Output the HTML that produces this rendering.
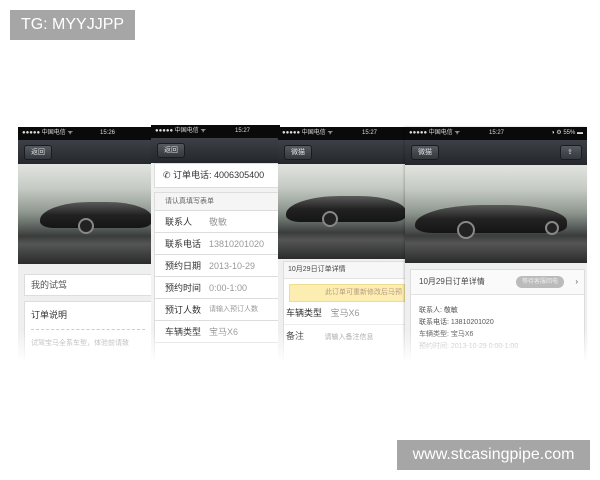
<!DOCTYPE html>
<html><head><meta charset="utf-8"><style>
*{margin:0;padding:0;box-sizing:border-box}
body{width:600px;height:480px;background:#fff;position:relative;overflow:hidden;font-family:"Liberation Sans","Noto Sans CJK SC",sans-serif}
.a{position:absolute}
.lbl{background:#a6a6a6;color:#fff;font-size:16px;line-height:30px;text-align:center}
.sb{background:#0a0a0a;color:#ddd;font-size:6px;line-height:13px;padding-left:4px;white-space:nowrap}
.nav{background:linear-gradient(#3d4147,#24272b)}
.btn{position:absolute;top:5px;left:6px;height:15px;padding:0 6px;background:linear-gradient(#555a61,#34383d);border:1px solid #1a1c1f;border-radius:3px;color:#ddd;font-size:7px;line-height:13px}
.car{background:linear-gradient(#e2e4df 0%,#c4cac3 25%,#8f9890 48%,#6d746f 58%,#3a3d3c 72%,#555 80%,#2a2b2b 100%);overflow:hidden}
.body{position:absolute;background:linear-gradient(#5a5a5a,#222 50%,#151515);border-radius:45% 40% 12% 12%/70% 60% 25% 25%}
.wh{position:absolute;background:#222;border:2px solid #888;border-radius:50%}
.pg{background:#efefef;overflow:hidden}
.row{position:absolute;left:0;right:0;height:22px;border-bottom:1px solid #ddd;background:#fff;font-size:9px;line-height:22px;color:#333;padding-left:10px;white-space:nowrap}
.row span{color:#999;position:absolute;left:54px}
.fade{background:linear-gradient(rgba(255,255,255,0),#fff 80%)}
</style></head><body>
<div class="a lbl" style="left:10px;top:10px;width:125px;height:30px">TG: MYYJJPP</div>

<!-- phone 1 -->
<div class="a pg" style="left:18px;top:127px;width:134px;height:235px">
<div class="a sb" style="left:0;top:0;width:134px;height:13px">●●●●● 中国电信 ᯤ<span style="position:absolute;left:82px">15:26</span></div>
<div class="a nav" style="left:0;top:13px;width:134px;height:24px"><div class="btn">返回</div></div>
<div class="a car" style="left:0;top:37px;width:134px;height:100px">
<div class="body" style="left:22px;top:38px;width:112px;height:26px"></div>
<div class="wh" style="left:60px;top:54px;width:16px;height:16px"></div>
</div>
<div class="a" style="left:6px;top:147px;width:128px;height:22px;background:#fff;border:1px solid #ddd;font-size:9px;line-height:20px;color:#555;padding-left:6px">我的试驾</div>
<div class="a" style="left:6px;top:174px;width:128px;height:70px;background:#fff;border:1px solid #ddd;font-size:9px;color:#333;padding:6px">订单说明<div style="border-top:1px dashed #ccc;margin:8px 0 8px"></div><div style="color:#999;font-size:7px;white-space:nowrap">试驾宝马全系车型，体验前请致</div></div>
</div>

<!-- phone 2 -->
<div class="a pg" style="left:151px;top:125px;width:129px;height:235px;background:#f2f2f2">
<div class="a sb" style="left:0;top:0;width:129px;height:13px">●●●●● 中国电信 ᯤ<span style="position:absolute;left:84px">15:27</span></div>
<div class="a nav" style="left:0;top:13px;width:129px;height:25px"><div class="btn">返回</div></div>
<div class="a" style="left:3px;top:38px;width:126px;height:25px;background:#fff;border:1px solid #ddd;font-size:9px;line-height:23px;color:#333;padding-left:8px;white-space:nowrap">✆ 订单电话: 4006305400</div>
<div class="a" style="left:3px;top:67px;width:126px;height:180px;background:#fff;border:1px solid #ddd">
<div class="row" style="top:0;height:18px;line-height:18px;background:#f5f5f5;font-size:7px;color:#666">请认真填写表单</div>
<div class="row" style="top:18px">联系人<span>敬敏</span></div>
<div class="row" style="top:40px">联系电话<span>13810201020</span></div>
<div class="row" style="top:62px">预约日期<span>2013-10-29</span></div>
<div class="row" style="top:84px">预约时间<span>0:00-1:00</span></div>
<div class="row" style="top:106px">预订人数<span style="font-size:7px">请输入预订人数</span></div>
<div class="row" style="top:128px">车辆类型<span>宝马X6</span></div>
</div>
</div>

<!-- phone 3 -->
<div class="a pg" style="left:278px;top:127px;width:128px;height:235px">
<div class="a sb" style="left:0;top:0;width:128px;height:13px">●●●●● 中国电信 ᯤ<span style="position:absolute;left:84px">15:27</span></div>
<div class="a nav" style="left:0;top:13px;width:128px;height:24px"><div class="btn">微猫</div></div>
<div class="a car" style="left:0;top:37px;width:128px;height:95px">
<div class="body" style="left:8px;top:32px;width:120px;height:26px"></div>
<div class="wh" style="left:44px;top:47px;width:16px;height:16px"></div>
</div>
<div class="a" style="left:5px;top:134px;width:123px;height:110px;background:#fff;border:1px solid #ddd">
<div style="font-size:7px;line-height:16px;padding-left:4px;color:#444;border-bottom:1px solid #e2e2e2;background:#f7f7f7">10月29日订单详情</div>
<div style="margin:5px 0 0 5px;height:18px;background:#fbeeb0;border:1px solid #eedc90;font-size:7px;line-height:16px;color:#b98;text-align:right;padding-right:2px;white-space:nowrap">此订单可重新修改后马预</div>
<div style="font-size:9px;line-height:22px;padding-left:2px;color:#333;border-bottom:1px solid #eee;white-space:nowrap">车辆类型 <span style="color:#999;margin-left:6px">宝马X6</span></div>
<div style="font-size:9px;line-height:22px;padding-left:2px;color:#333;white-space:nowrap">备注 <span style="color:#999;margin-left:18px;font-size:7px">请输入备注信息</span></div>
</div>
</div>

<!-- phone 4 -->
<div class="a pg" style="left:405px;top:127px;width:182px;height:235px;box-shadow:-1px 0 2px rgba(0,0,0,.2)">
<div class="a sb" style="left:0;top:0;width:182px;height:13px">●●●●● 中国电信 ᯤ<span style="position:absolute;left:84px">15:27</span><span style="position:absolute;right:4px">◑ ⚙ 55% ▬</span></div>
<div class="a nav" style="left:0;top:13px;width:182px;height:25px"><div class="btn">微猫</div><div class="btn" style="left:auto;right:5px;width:22px">⇪</div></div>
<div class="a car" style="left:0;top:38px;width:182px;height:98px">
<div class="body" style="left:10px;top:40px;width:152px;height:28px"></div>
<div class="wh" style="left:52px;top:56px;width:18px;height:18px"></div>
<div class="wh" style="left:140px;top:56px;width:14px;height:14px"></div>
</div>
<div class="a" style="left:5px;top:142px;width:175px;height:100px;background:#fff;border:1px solid #ddd">
<div style="position:relative;font-size:8px;line-height:24px;padding-left:8px;color:#444;border-bottom:1px solid #e2e2e2;background:#fafafa">10月29日订单详情<span style="position:absolute;right:20px;top:6px;height:12px;width:48px;border-radius:6px;background:#bbb;color:#eee;font-size:6px;line-height:12px;text-align:center">等待客服回电</span><span style="position:absolute;right:6px;color:#555">›</span></div>
<div style="font-size:7px;line-height:12px;padding:10px 0 0 8px;color:#555;white-space:nowrap">联系人: 敬敏<br>联系电话: 13810201020<br>车辆类型: 宝马X6<br><span style="color:#aaa">预约时间: 2013-10-29 0:00-1:00</span></div>
</div>
</div>

<div class="a fade" style="left:0;top:330px;width:600px;height:40px"></div>
<div class="a lbl" style="left:397px;top:440px;width:193px;height:30px">www.stcasingpipe.com</div>
</body></html>
